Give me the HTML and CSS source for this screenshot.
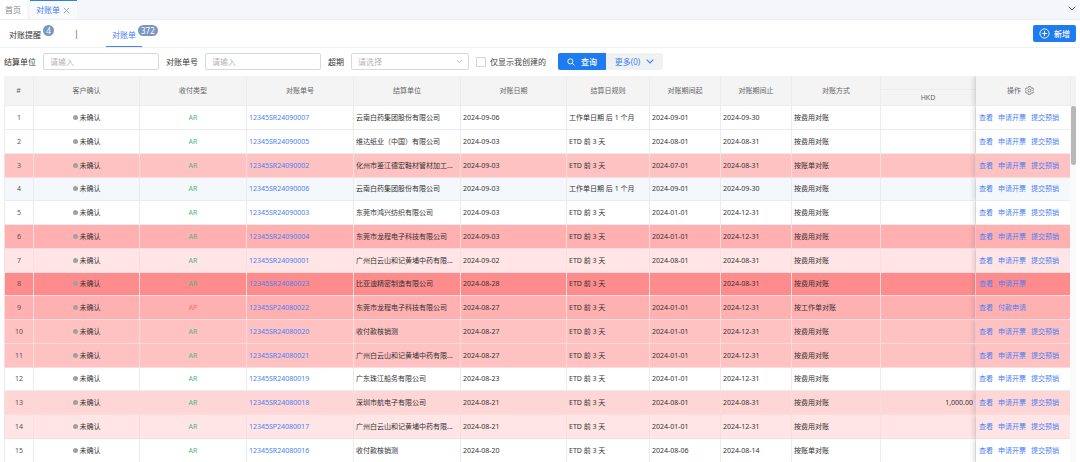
FILE: index.html
```html
<!DOCTYPE html>
<html lang="zh-CN">
<head>
<meta charset="utf-8">
<meta name="viewport" content="width=device-width, initial-scale=1">
<title>对账单</title>
<link rel="stylesheet" href="styles.css">
</head>
<body>
<nav class="page-tabs">
  <a class="page-tab" href="#home">首页</a>
  <a class="page-tab page-tab-active" href="#bill">对账单
    <svg class="close" viewBox="0 0 8 8"><path d="M1 1l6 6M7 1l-6 6"/></svg>
  </a>
  <button class="page-tabs-more" aria-label="更多标签"><svg viewBox="0 0 8 5"><path d="M.7.7L4 4 7.300.7"/></svg></button>
</nav>
<header class="toolbar">
  <a class="view" href="#remind"><span class="view-name">对账提醒<span class="badge">4</span></span></a>
  <span class="view-sep">|</span>
  <a class="view view-active" href="#list"><span class="view-name">对账单<span class="badge">372</span></span></a>
  <button class="btn btn-primary btn-add"><svg class="icon-plus" viewBox="0 0 12 12"><circle cx="6" cy="6" r="5"/><path d="M6 3.200v5.600M3.200 6h5.600"/></svg>新增</button>
</header>
<form class="filters">
  <label class="filter-label" for="unit">结算单位</label>
  <input class="field" id="unit" type="text" placeholder="请输入">
  <label class="filter-label" for="number">对账单号</label>
  <input class="field" id="number" type="text" placeholder="请输入">
  <label class="filter-label" for="overdue">超期</label>
  <span class="select-box">
    <select class="field" id="overdue"><option>请选择</option></select>
    <svg class="select-arrow" viewBox="0 0 8 5"><path d="M1 .8L4 4 7 .8"/></svg>
  </span>
  <label class="check"><input class="check-box" type="checkbox">仅显示我创建的</label>
  <span class="actions">
    <button class="btn btn-primary btn-search" type="button"><svg class="icon-search" viewBox="0 0 10 10"><circle cx="4.200" cy="4.200" r="3.200"/><path d="M6.600 6.600L9.300 9.300"/></svg>查询</button>
    <button class="btn btn-more" type="button">更多(0)<svg class="icon-down" viewBox="0 0 8 5"><path d="M.7.7L4 4 7.300.7"/></svg></button>
  </span>
</form>
<main class="grid">
<table class="bills">
<colgroup><col class="c-index"><col class="c-main"><col class="c-wide"><col class="c-wide"><col class="c-wide"><col class="c-main"><col class="c-rule"><col class="c-date"><col class="c-date"><col class="c-mode"><col class="c-sum"><col class="c-sum"></colgroup>
<thead>
<tr class="head-top"><th rowspan="2">#</th><th rowspan="2">客户确认</th><th rowspan="2">收付类型</th><th rowspan="2">对账单号</th><th rowspan="2">结算单位</th><th rowspan="2">对账日期</th><th rowspan="2">结算日规则</th><th rowspan="2">对账期间起</th><th rowspan="2">对账期间止</th><th rowspan="2">对账方式</th><th class="group"></th><th class="ops" rowspan="2"><span class="ops-title">操作<svg class="icon-gear" viewBox="0 0 12 12"><path d="M4.600.8h2.800l.5 1.500 1.100.6 1.500-.3 1.200 2.100L10.700 6l1 1.300-1.200 2.100L9 9.100l-1.100.6-.5 1.500H4.600l-.5-1.500L3 9.100l-1.500.3L.3 7.300 1.300 6l-1-1.300 1.200-2.100L3 2.900l1.100-.6z"/><circle cx="6" cy="6" r="1.900"/></svg></span></th></tr>
<tr class="head-sub"><th>HKD</th></tr>
</thead>
<tbody>
<tr><td>1</td><td><i class="dot"></i>未确认</td><td class="ar">AR</td><td><a href="#b1">12345SR24090007</a></td><td>云南白药集团股份有限公司</td><td>2024-09-06</td><td>工作单日期 后 1 个月</td><td>2024-09-01</td><td>2024-09-30</td><td>按费用对账</td><td></td><td class="ops"><a href="#v">查看</a><a href="#i">申请开票</a><a href="#w">提交预销</a></td></tr>
<tr><td>2</td><td><i class="dot"></i>未确认</td><td class="ar">AR</td><td><a href="#b2">12345SR24090005</a></td><td>维达纸业（中国）有限公司</td><td>2024-09-03</td><td>ETD 前 3 天</td><td>2024-08-01</td><td>2024-08-31</td><td>按费用对账</td><td></td><td class="ops"><a href="#v">查看</a><a href="#i">申请开票</a><a href="#w">提交预销</a></td></tr>
<tr class="late late-3"><td>3</td><td><i class="dot"></i>未确认</td><td class="ar">AR</td><td><a href="#b3">12345SR24090002</a></td><td>化州市鉴江德宏鞋材管材加工...</td><td>2024-09-03</td><td>ETD 前 3 天</td><td>2024-07-01</td><td>2024-08-31</td><td>按账单对账</td><td></td><td class="ops"><a href="#v">查看</a><a href="#i">申请开票</a><a href="#w">提交预销</a></td></tr>
<tr class="hovered"><td>4</td><td><i class="dot"></i>未确认</td><td class="ar">AR</td><td><a href="#b4">12345SR24090006</a></td><td>云南白药集团股份有限公司</td><td>2024-09-03</td><td>工作单日期 后 1 个月</td><td>2024-09-01</td><td>2024-09-30</td><td>按费用对账</td><td></td><td class="ops"><a href="#v">查看</a><a href="#i">申请开票</a><a href="#w">提交预销</a></td></tr>
<tr><td>5</td><td><i class="dot"></i>未确认</td><td class="ar">AR</td><td><a href="#b5">12345SR24090003</a></td><td>东莞市鸿兴纺织有限公司</td><td>2024-09-03</td><td>ETD 前 3 天</td><td>2024-01-01</td><td>2024-12-31</td><td>按费用对账</td><td></td><td class="ops"><a href="#v">查看</a><a href="#i">申请开票</a><a href="#w">提交预销</a></td></tr>
<tr class="late late-4"><td>6</td><td><i class="dot"></i>未确认</td><td class="ar">AR</td><td><a href="#b6">12345SR24090004</a></td><td>东莞市龙程电子科技有限公司</td><td>2024-09-03</td><td>ETD 前 3 天</td><td>2024-01-01</td><td>2024-12-31</td><td>按费用对账</td><td></td><td class="ops"><a href="#v">查看</a><a href="#i">申请开票</a><a href="#w">提交预销</a></td></tr>
<tr class="late late-1"><td>7</td><td><i class="dot"></i>未确认</td><td class="ar">AR</td><td><a href="#b7">12345SR24090001</a></td><td>广州白云山和记黄埔中药有限...</td><td>2024-09-02</td><td>ETD 前 3 天</td><td>2024-08-01</td><td>2024-08-31</td><td>按费用对账</td><td></td><td class="ops"><a href="#v">查看</a><a href="#i">申请开票</a><a href="#w">提交预销</a></td></tr>
<tr class="late late-5"><td>8</td><td><i class="dot"></i>未确认</td><td class="ar">AR</td><td><a href="#b8">12345SR24080023</a></td><td>比亚迪精密制造有限公司</td><td>2024-08-28</td><td>ETD 前 3 天</td><td></td><td>2024-08-31</td><td>按费用对账</td><td></td><td class="ops"><a href="#v">查看</a><a href="#i">申请开票</a></td></tr>
<tr class="late late-4"><td>9</td><td><i class="dot"></i>未确认</td><td class="ap">AP</td><td><a href="#b9">12345SP24080022</a></td><td>东莞市龙程电子科技有限公司</td><td>2024-08-27</td><td>ETD 前 3 天</td><td>2024-01-01</td><td>2024-12-31</td><td>按工作单对账</td><td></td><td class="ops"><a href="#v">查看</a><a href="#p">付款申请</a></td></tr>
<tr class="late late-3"><td>10</td><td><i class="dot"></i>未确认</td><td class="ar">AR</td><td><a href="#b10">12345SR24080020</a></td><td>收付款核销测</td><td>2024-08-27</td><td>ETD 前 3 天</td><td>2024-01-01</td><td>2024-12-31</td><td>按费用对账</td><td></td><td class="ops"><a href="#v">查看</a><a href="#i">申请开票</a><a href="#w">提交预销</a></td></tr>
<tr class="late late-3"><td>11</td><td><i class="dot"></i>未确认</td><td class="ar">AR</td><td><a href="#b11">12345SR24080021</a></td><td>广州白云山和记黄埔中药有限...</td><td>2024-08-27</td><td>ETD 前 3 天</td><td>2024-01-01</td><td>2024-12-31</td><td>按费用对账</td><td></td><td class="ops"><a href="#v">查看</a><a href="#i">申请开票</a><a href="#w">提交预销</a></td></tr>
<tr><td>12</td><td><i class="dot"></i>未确认</td><td class="ar">AR</td><td><a href="#b12">12345SR24080019</a></td><td>广东珠江船务有限公司</td><td>2024-08-23</td><td>ETD 前 3 天</td><td>2024-01-01</td><td>2024-12-31</td><td>按费用对账</td><td></td><td class="ops"><a href="#v">查看</a><a href="#i">申请开票</a><a href="#w">提交预销</a></td></tr>
<tr class="late late-2"><td>13</td><td><i class="dot"></i>未确认</td><td class="ar">AR</td><td><a href="#b13">12345SR24080018</a></td><td>深圳市航电子有限公司</td><td>2024-08-21</td><td>ETD 前 3 天</td><td>2024-08-01</td><td>2024-08-31</td><td>按费用对账</td><td class="amount">1,000.00</td><td class="ops"><a href="#v">查看</a><a href="#i">申请开票</a><a href="#w">提交预销</a></td></tr>
<tr class="late late-1"><td>14</td><td><i class="dot"></i>未确认</td><td class="ar">AR</td><td><a href="#b14">12345SP24080017</a></td><td>广州白云山和记黄埔中药有限...</td><td>2024-08-21</td><td>ETD 前 3 天</td><td>2024-01-01</td><td>2024-12-31</td><td>按费用对账</td><td></td><td class="ops"><a href="#v">查看</a><a href="#i">申请开票</a><a href="#w">提交预销</a></td></tr>
<tr><td>15</td><td><i class="dot"></i>未确认</td><td class="ar">AR</td><td><a href="#b15">12345SR24080016</a></td><td>收付款核销测</td><td>2024-08-20</td><td>ETD 前 3 天</td><td>2024-08-06</td><td>2024-08-14</td><td>按账单对账</td><td></td><td class="ops"><a href="#v">查看</a><a href="#i">申请开票</a><a href="#w">提交预销</a></td></tr>
</tbody>
</table>
<div class="scroll"><div class="scroll-head"></div><div class="scroll-thumb"></div></div>
</main>
</body>
</html>
```

FILE: styles.css
```css
* { box-sizing: border-box; }
body {
  margin: 0;
  background: #fff;
  color: #333;
  font-family: "Noto Sans", "Noto Sans CJK SC", sans-serif;
  font-size: 8px;
  line-height: 12px;
}
a { color: #4a80f5; text-decoration: none; }
button, input, select { font: inherit; margin: 0; }
button { border: 0; padding: 0; background: none; cursor: pointer; }
svg { fill: none; stroke: currentColor; flex: none; }

.page-tabs {
  display: flex;
  height: 20px;
  background: #f4f6f9;
  border-bottom: 1px solid #eceef1;
}
.page-tab {
  display: flex;
  align-items: center;
  gap: 3px;
  margin-right: 3px;
  padding: 0 6px 0 5px;
  border-top: 1px solid #fff;
  background: #fff;
  color: #888;
}
.page-tab-active {
  padding: 0 7px 0 6px;
  border-top-color: #2f80e8;
  background: #f8fafc;
  color: #3f80f5;
}
.close { width: 7px; height: 7px; color: #8b95a3; stroke-width: 1; }
.page-tabs-more { display: flex; align-items: center; margin-left: auto; padding: 0 4px 3px 0; color: #666; }
.page-tabs-more svg { width: 8px; height: 5px; }

.toolbar {
  display: flex;
  align-items: center;
  height: 28px;
  padding: 0 4px 0 3px;
  border-bottom: 1px solid #f0f1f3;
}
.view {
  display: flex;
  align-items: center;
  align-self: stretch;
  padding: 3px 6px 0;
  border-bottom: 1px solid transparent;
  color: #333;
}
.view-active { border-bottom-color: #3f86f0; color: #3f80f5; }
.view-name { position: relative; }
.badge {
  position: absolute;
  left: 100%;
  top: -4px;
  min-width: 11px;
  height: 11px;
  margin-left: 2px;
  padding: 0 3px;
  border-radius: 6px;
  background: #7b96c2;
  color: #fff;
  font-size: 8px;
  line-height: 11px;
  text-align: center;
}
.view-sep { width: 59px; text-align: center; color: #555; }

.btn {
  display: flex;
  align-items: center;
  justify-content: center;
  height: 17px;
  border-radius: 2px;
}
.btn-primary { background: #1f7bf0; color: #fff; font-weight: 500; }
.btn-add { gap: 4px; width: 43px; margin-left: auto; }
.icon-plus { width: 11px; height: 11px; }
.icon-search { width: 8px; height: 8px; stroke-width: 1.2; }
.btn-search { gap: 6px; width: 48px; border-radius: 2px 0 0 2px; }
.btn-more { gap: 6px; width: 57px; border-radius: 0 2px 2px 0; background: #f0f1f2; color: #3f86f0; }
.icon-down { width: 8px; height: 5px; stroke-width: 1.2; }

.filters {
  display: flex;
  align-items: center;
  gap: 7px;
  padding: 5px 4px 6px;
}
.field {
  width: 116px;
  height: 17px;
  padding: 0 6px;
  border: 1px solid #d5dadf;
  border-radius: 2px;
  background: #fff;
  color: #b5b5b5;
  outline: 0;
}
.field::placeholder { color: #b5b5b5; opacity: 1; }
.select-box { position: relative; display: flex; }
select.field { width: 118px; appearance: none; }
.select-arrow { position: absolute; right: 6px; top: 6px; width: 7px; height: 5px; color: #b5b9c0; }
.check { display: flex; align-items: center; gap: 4px; color: #444; }
.check-box {
  appearance: none;
  width: 10px;
  height: 10px;
  border: 1px solid #d0d5db;
  border-radius: 1px;
  background: #fff;
}
.actions { display: flex; margin-left: 5px; }

.grid { display: flex; padding: 0 4px; }
.bills {
  flex: 1;
  width: 100%;
  min-width: 0;
  table-layout: fixed;
  border-collapse: separate;
  border-spacing: 0;
  font-size: 7px;
  line-height: 10px;
}
.c-index { width: 30px; }
.c-main { width: 106px; }
.c-wide { width: 107px; }
.c-rule { width: 83px; }
.c-date { width: 71px; }
.c-mode { width: 89px; }
.c-sum { width: 95px; }
.c-sum:last-child { width: 94px; }
.bills th, .bills td {
  padding: 0 2px;
  border: solid #eaecee;
  border-width: 0 1px 1px 0;
  overflow: hidden;
  white-space: nowrap;
  text-overflow: ellipsis;
  text-align: left;
}
.bills th { background: #f4f4f4; color: #666; font-weight: 400; text-align: center; }
.head-top { height: 14px; }
.head-sub { height: 16px; }
.bills tbody tr { height: 24px; background: #fff; }
.bills tbody tr:nth-child(4n) { height: 23px; }
.bills td:nth-child(-n+3) { text-align: center; }
.bills td:first-child { border-left-width: 1px; color: #555; }
.bills td.amount { text-align: right; }
.bills .ar { color: #55b585; }
.bills .ap { color: #ff6b6b; }
.dot {
  display: inline-block;
  width: 5px;
  height: 5px;
  margin-right: 2px;
  border-radius: 50%;
  background: #a0a0a0;
}
.bills .ops {
  padding: 0 3px;
  border-right-width: 0;
  overflow: visible;
  background-color: inherit;
  box-shadow: -3px 0 4px rgba(0, 0, 0, .1);
  clip-path: inset(0 0 0 -8px);
}
.bills th.ops { padding-right: 8px; background-color: #f4f4f4; }
td.ops a + a { margin-left: 5px; }
.ops-title { display: inline-flex; align-items: center; gap: 4px; }
.icon-gear { width: 9px; height: 9px; }
.bills tbody .hovered { background: #f5f8fb; }
.late td { border-color: #fbdcdc; }
.bills tbody .late-1 { background: #ffe5e5; }
.bills tbody .late-2 { background: #ffd6d6; }
.bills tbody .late-3 { background: #ffc2c2; }
.bills tbody .late-4 { background: #ffb0b0; }
.bills tbody .late-5 { background: #ff8c8c; }

.scroll { width: 6px; background: #fafafa; }
.scroll-head { height: 30px; border-left: 1px solid #eaecee; background: #f4f4f4; }
.scroll-thumb { height: 59px; margin-left: 1px; border-radius: 2px; background: #b8b8b8; }
```
